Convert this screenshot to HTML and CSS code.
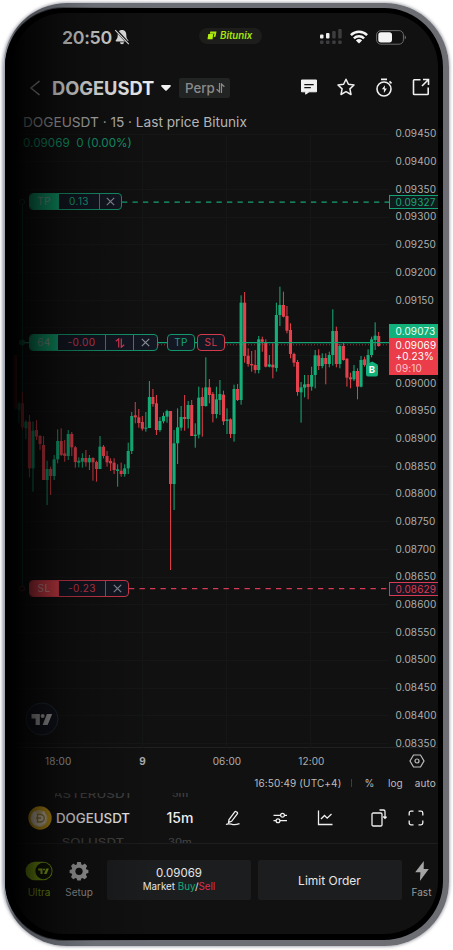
FILE: index.html
```html
<!DOCTYPE html>
<html lang="en">
<head>
    <meta charset="UTF-8">
    <meta name="viewport" content="width=device-width, initial-scale=1.0">
    <title>DOGEUSDT Perp</title>
    <link rel="stylesheet" href="styles.css">
</head>
<body>
    <div class="phone">
        <div class="screen">
            <div class="status-bar">
                <span class="clock">20:50</span>
                <svg class="bell" width="16" height="16" viewBox="0 0 16 16">
                    <path d="M8 1C5 1 3.700 3.300 3.700 6c0 3-.8 3.800-1.900 5.200-.4.6-.1 1.200.5 1.200h11.400c.6 0 .9-.6.5-1.200C13.100 9.800 12.300 9 12.300 6 12.300 3.300 11 1 8 1zM6 13.300a2 2 0 0 0 4 0z" fill="#e8e8e8"/>
                    <path d="M1.800.8l13 14" stroke="#101010" stroke-width="2.600"/>
                    <path d="M1.200 1.200l13.600 14" stroke="#e8e8e8" stroke-width="1.100"/>
                </svg>
                <div class="island">
                    <svg width="10" height="9" viewBox="0 0 10 9">
                        <path d="M3.300.5h6.200l-.9 5-2 .9.700-3.700H2.800z" fill="#a8e60c"/>
                        <path d="M1.300 3.100h5L5.500 8.300H.5z" fill="#b4f00f"/>
                    </svg>
                    <span>Bitunix</span>
                </div>
                <svg class="signal" width="22" height="16" viewBox="0 0 22 16">
                    <g fill="#f0f0f0"><rect x="0" y="5.500" width="3.500" height="4" rx="1"/><rect x="6" y="4" width="3.500" height="5.500" rx="1"/></g>
                    <g fill="#3d3d3f"><rect x="12.200" y="2" width="3.500" height="7.500" rx="1"/><rect x="18.200" y="0" width="3.500" height="9.500" rx="1"/>
                    <rect x="0" y="11.500" width="3.500" height="3.500" rx="1"/><rect x="6" y="11.500" width="3.500" height="3.500" rx="1"/><rect x="12.200" y="11.500" width="3.500" height="3.500" rx="1"/><rect x="18.200" y="11.500" width="3.500" height="3.500" rx="1"/></g>
                </svg>
                <svg class="wifi" width="18" height="14" viewBox="0 0 18 14" fill="none" stroke="#f4f4f4" stroke-width="2.500">
                    <path d="M.9 5.100a11.600 11.600 0 0 1 16.200 0"/>
                    <path d="M3.900 8.300a7.300 7.300 0 0 1 10.200 0"/>
                    <path d="M9 13.600L5.900 10.400a4.600 4.600 0 0 1 6.200 0z" fill="#f4f4f4" stroke="none"/>
                </svg>
                <svg width="31" height="15" viewBox="0 0 31 15">
                    <rect x=".6" y=".6" width="26.800" height="13.600" rx="4.300" fill="none" stroke="#6c6c6c" stroke-width="1"/>
                    <rect x="2.300" y="2.300" width="13.700" height="10.200" rx="2.700" fill="#f4f4f4"/>
                    <path d="M28.700 5.200c1.700.7 1.700 3.700 0 4.400z" fill="#6c6c6c"/>
                </svg>
            </div>

            <div class="nav">
                <svg class="back" width="12" height="16" viewBox="0 0 12 16" fill="none" stroke="#aaa" stroke-width="1.500"><path d="M10.500 1L2 8l8.500 7"/></svg>
                <h1>DOGEUSDT</h1>
                <svg class="caret" width="10" height="6" viewBox="0 0 10 6"><path d="M1 0h8c.8 0 1.200.8.600 1.400L5.700 5.500c-.4.4-1 .4-1.400 0L.4 1.400C-.2.8.2 0 1 0z" fill="#f2f2f2"/></svg>
                <div class="perp">Perp
                    <svg width="9" height="10" viewBox="0 0 9 10" fill="none" stroke="#8b8b8b" stroke-width="1.200"><path d="M3.500 0v9L.6 6.300M5.500 10V1l2.900 2.700"/></svg>
                </div>
                <div class="nav-icons">
                    <svg width="18" height="18" viewBox="0 0 18 18"><path d="M1.500 2h15v11.800H9L5.700 16.200v-2.400H1.500z" fill="#f0f0f0" stroke="#f0f0f0" stroke-linejoin="round"/><path d="M4.300 6.700h9.400M4.300 9.700h6.500" stroke="#111" stroke-width="1.300"/></svg>
                    <svg width="18" height="18" viewBox="0 0 18 18" fill="none" stroke="#f0f0f0" stroke-width="1.500" stroke-linejoin="round"><path d="M9 1.200l2.400 5.100 5.600.7-4.100 3.900 1.100 5.600L9 13.700l-5 2.800 1.100-5.600L1 7l5.600-.7z"/></svg>
                    <svg width="18" height="19" viewBox="0 0 18 19" fill="none" stroke="#f0f0f0" stroke-width="1.600"><circle cx="9" cy="11" r="7"/><path d="M6 1.400h6M14.500 3.400l2 2"/><path d="M9.900 7.200L6.900 11.300h2v3.600l3-4.400H9.800z" fill="#f0f0f0" stroke="none"/></svg>
                    <svg width="18" height="18" viewBox="0 0 18 18" fill="none" stroke="#f0f0f0" stroke-width="1.600"><path d="M8.500 1.800H2.300a.8.8 0 0 0-.8.800v13.100c0 .4.4.8.8.8h13.100c.4 0 .8-.4.8-.8V9.500M11 1.500h5.500V7M16.200 1.800L10 8"/></svg>
                </div>
            </div>

            <div class="chart">
                <svg class="plot" width="377" height="636" viewBox="12 112 377 636">
                    <g id="grid" stroke="#151616"></g>
                    <path d="M22.500 202V588" stroke="#125040"/>
                    <circle cx="22" cy="202" r="2.500" fill="#111" stroke="#125040"/>
                    <circle cx="22" cy="588.500" r="2.500" fill="#111" stroke="#70303a"/>
                    <path d="M122 202.200H389" stroke="#16a176" stroke-width="1.300" stroke-dasharray="5.300 5.200"/>
                    <path d="M129 588.700H389" stroke="#d93a55" stroke-width="1.300" stroke-dasharray="5.300 5.200"/>
                    <path d="M158 344.800H389" stroke="#a0313a" stroke-dasharray="1 2"/>
                    <g id="candles"></g>
                    <path d="M22 342.700H389" stroke="#14a274" stroke-width="1.200"/>
                    <circle cx="22" cy="342.500" r="3" fill="#0d7a58"/>
                    <path d="M372.200 361.500l4.500 2.500q1.300.6 1.300 2v8.500q0 2-2 2h-8q-2 0-2-2V366q0-1.400 1.300-2z" fill="#12b07a"/>
                    <text class="fill-mark" x="372" y="373.300">B</text>
                </svg>

                <ul class="price-axis">
                    <li>0.09450</li>
                    <li>0.09400</li>
                    <li>0.09350</li>
                    <li>0.09300</li>
                    <li>0.09250</li>
                    <li>0.09200</li>
                    <li>0.09150</li>
                    <li></li>
                    <li></li>
                    <li>0.09000</li>
                    <li>0.08950</li>
                    <li>0.08900</li>
                    <li>0.08850</li>
                    <li>0.08800</li>
                    <li>0.08750</li>
                    <li>0.08700</li>
                    <li>0.08650</li>
                    <li>0.08600</li>
                    <li>0.08550</li>
                    <li>0.08500</li>
                    <li>0.08450</li>
                    <li>0.08400</li>
                    <li>0.08350</li>
                </ul>

                <div class="tag tag-tp">0.09327</div>
                <div class="tag tag-entry">0.09073</div>
                <div class="tag tag-last"><span>0.09069</span><span>+0.23%</span><span class="countdown">09:10</span></div>
                <div class="tag tag-sl">0.08629</div>

                <div class="legend">
                    <div class="legend-title">DOGEUSDT · 15 · Last price Bitunix</div>
                    <div class="legend-values">0.09069&nbsp; 0 (0.00%)</div>
                </div>

                <div class="order green order-tp">
                    <span class="kind">TP</span><span class="value">0.13</span>
                    <span class="close"><svg width="9" height="9" viewBox="0 0 9 9"><path d="M.8.8l7.400 7.400M8.200.8L.8 8.200"/></svg></span>
                </div>
                <div class="order-row">
                    <div class="order green order-position">
                        <span class="kind">64</span><span class="value loss">-0.00</span>
                        <span class="reverse"><svg width="10" height="10" viewBox="0 0 10 10"><path d="M.8 3.200L3.700.8V9.600M6.300.4v8.800l2.900-2.400"/></svg></span>
                        <span class="close"><svg width="9" height="9" viewBox="0 0 9 9"><path d="M.8.8l7.400 7.400M8.200.8L.8 8.200"/></svg></span>
                    </div>
                    <div class="order green chip">TP</div>
                    <div class="order red chip">SL</div>
                </div>
                <div class="order red order-sl">
                    <span class="kind">SL</span><span class="value">-0.23</span>
                    <span class="close"><svg width="9" height="9" viewBox="0 0 9 9"><path d="M.8.8l7.400 7.400M8.200.8L.8 8.200"/></svg></span>
                </div>

                <svg class="tv-logo" width="34" height="34" viewBox="0 0 34 34">
                    <circle cx="17" cy="17" r="16" fill="#10141d" stroke="#26303c"/>
                    <g fill="#b8b8b8"><path d="M6.500 12h8.300v11h-4.200v-6.600H6.500z"/><circle cx="17.600" cy="14" r="2"/><path d="M21.900 12h5.300l-4.600 11h-5z"/></g>
                </svg>
            </div>

            <div class="time-axis">
                <span>18:00</span>
                <b>9</b>
                <span>06:00</span>
                <span>12:00</span>
                <svg width="16" height="14" viewBox="0 0 16 14" fill="none" stroke="#bdbdbd" stroke-width="1.200"><path d="M4.500 1h7L15 7l-3.500 6h-7L1 7z"/><circle cx="8" cy="7" r="2"/></svg>
            </div>

            <div class="scale-row">
                <span class="utc">16:50:49 (UTC+4)</span>
                <span class="sep"></span>
                <span class="pct">%</span>
                <span class="log">log</span>
                <span>auto</span>
            </div>

            <div class="pair-bar">
                <svg class="coin" width="24" height="24" viewBox="0 0 24 24">
                    <circle cx="12" cy="12" r="11.700" fill="#d2a31a"/>
                    <circle cx="11" cy="12.500" r="8.600" fill="#d8c08a"/>
                    <path d="M3.500 9l3-4 2.500 3h4l3-3.500 2 6.500-1 6-5 3-6-1.500L3 14z" fill="#ecdfc4"/>
                    <path d="M9.500 8.500h3a3.500 3.500 0 0 1 0 7.500h-3zM8 12h5" fill="none" stroke="#a68a45" stroke-width="1.400"/>
                </svg>
                <div class="picker pair">
                    <span class="ghost">ASTERUSDT</span>
                    <span>DOGEUSDT</span>
                    <span class="ghost">SOLUSDT</span>
                </div>
                <div class="picker interval">
                    <span class="ghost">5m</span>
                    <span>15m</span>
                    <span class="ghost">30m</span>
                </div>
                <div class="tools">
                    <svg width="16" height="16" viewBox="0 0 16 16"><path d="M4 9.600L9.800 1.900c.4-.5 1-.6 1.500-.2l.8.6c.5.400.6 1 .2 1.500L6.600 11.300l-3 1.100zM1 14.600c2-1.500 4-.8 6-.3s4 .5 7.500-.7"/></svg>
                    <svg width="16" height="16" viewBox="0 0 16 16"><path d="M1.500 5.300h7M12.500 5.300H15M1.500 10.700h2.500M8 10.700H15"/><circle cx="10.500" cy="5.300" r="1.900"/><circle cx="6" cy="10.700" r="1.900"/></svg>
                    <svg width="16" height="16" viewBox="0 0 16 16"><path d="M1.500.5v14h14M4 9l3.500-3.500 2.700 2.700L14.500 4"/></svg>
                    <svg width="16" height="18" viewBox="0 0 16 18"><path d="M1 5.200c0-.7.500-1.200 1.200-1.200h7.600c.7 0 1.200.5 1.200 1.200v10.600c0 .7-.5 1.200-1.200 1.200H2.200C1.500 17 1 16.500 1 15.800zM8.500 1h4c.8 0 1.500.7 1.500 1.500V9M12.200 7.500L14 9.300l1.600-1.600"/></svg>
                    <svg width="16" height="16" viewBox="0 0 16 16"><path d="M1.200 5.500V3c0-1 .8-1.800 1.800-1.800h2.500M10.500 1.200H13c1 0 1.800.8 1.800 1.800v2.500M14.800 10.500V13c0 1-.8 1.800-1.800 1.800h-2.500M5.500 14.800H3c-1 0-1.800-.8-1.800-1.800v-2.500"/></svg>
                </div>
            </div>

            <div class="footer">
                <div class="action ultra">
                    <svg width="28" height="20" viewBox="0 0 28 20">
                        <rect x=".5" y=".7" width="27" height="18.600" rx="9.300" fill="#8fba14"/>
                        <circle cx="18.500" cy="10" r="8.200" fill="#12160a"/>
                        <g fill="#a8d024"><path d="M13.200 7.400h4.300V13h-2v-3.500h-2.300z"/><circle cx="19" cy="8.400" r="1"/><path d="M21.200 7.400h2.700L21.600 13H19z"/></g>
                    </svg>
                    <span>Ultra</span>
                </div>
                <div class="action">
                    <svg width="20" height="20" viewBox="0 0 20 20"><path d="M8.200 1h3.600l.6 2.400 1.200.5 2.200-1.300 2.300 2.400-1.200 2.200.5 1.200 2 .5v3l-2 .6-.5 1.300 1.200 2.200-2.400 2.300-2.200-1.200-1.200.5-.6 1.900H8.300l-.6-1.900-1.300-.5-2.200 1.200L2 16l1.200-2.200-.6-1.300-2-.6V8.900l2-.5.6-1.200L2 5l2.200-2.400 2.200 1.300 1.300-.5z" fill="#a5a5a5"/><circle cx="10" cy="10.300" r="3.600" fill="#111"/></svg>
                    <span>Setup</span>
                </div>
                <button class="trade market">
                    <span class="price">0.09069</span>
                    <span>Market <i class="buy">Buy</i>/<i class="sell">Sell</i></span>
                </button>
                <button class="trade">Limit Order</button>
                <div class="action">
                    <svg width="16" height="20" viewBox="0 0 16 20"><path d="M9.800 0L1.200 11.300h5.200L5.900 20l8.900-12H9.700z" fill="#a5a5a5"/></svg>
                    <span>Fast</span>
                </div>
            </div>

            <div class="home-area"></div>
        </div>
        <div class="fade"></div>
    </div>

    <script>
        const UP = '#14ae78';
        const DOWN = '#e5414c';
        const STEP = 3.5276;

        // [up, body top, body bottom, wick top, wick bottom], in thirds of a pixel below each segment's top
        const segments = [
            { top: 370, bars: [
                [0,-45,115,-45,120],[1,100,120,95,160],[0,100,172,65,180],[1,155,175,150,208],
                [0,155,295,135,322],[1,182,295,155,365],[0,180,200,150,210],[0,198,222,195,240],
                [0,225,330,198,330],[1,297,330,272,405],[0,297,318,290,375],[1,268,318,255,330],
                [1,213,268,178,280],[0,213,255,175,258],[0,250,258,210,275],[1,192,258,180,270],
                [0,192,232,186,258],[0,232,276,228,293],[1,272,278,262,292],[1,264,275,250,293],
                [0,264,277,240,290],[1,264,277,255,300],[0,264,277,262,332],[0,276,297,272,335],
                [1,230,297,198,297],[0,230,258,225,265],[0,258,277,243,290],[0,273,280,265,303],
                [0,278,300,265,312],[1,298,303,283,350],[0,302,312,278,320],[1,295,312,283,320]
            ] },
            { top: 340, bars: [
                [1,333,385,308,402],[1,228,333,216,342],[0,226,232,186,250],[0,232,249,207,263],
                [0,246,266,228,272],[1,263,266,216,275],[1,171,264,123,264],[0,171,192,147,200],
                [0,190,270,165,285],[1,243,270,231,275],[1,228,244,218,250],[1,213,230,209,248],
                [0,213,432,213,690],[1,310,432,270,510],[1,262,310,205,372],[1,231,263,198,272],
                [0,231,237,165,272],[1,195,237,183,265],[0,195,288,180,288],[1,284,288,250,323],
                [1,173,284,140,295],[0,171,198,143,290],[1,142,198,52,200],[0,142,165,117,190],
                [0,162,222,156,247],[1,178,222,140,235],[1,162,180,120,225],[0,164,244,152,255],
                [1,238,243,205,282],[0,238,282,235,294],[1,147,282,134,305],[0,147,180,132,183]
            ] },
            { top: 270, bars: [
                [1,98,390,76,404],[0,98,258,66,278],[0,257,282,235,290],[0,282,286,243,305],
                [0,285,300,240,310],[1,208,300,198,310],[0,208,215,200,245],[0,219,290,208,292],
                [1,283,290,255,292],[0,284,292,220,325],[1,135,294,98,305],[1,105,135,50,168],
                [0,105,140,65,142],[0,138,182,108,190],[0,180,252,160,265],[0,252,278,248,290],
                [0,276,366,270,377],[1,352,367,336,458],[1,343,353,315,382],[0,342,351,315,388],
                [1,315,350,290,362],[1,256,315,240,355],[0,256,288,238,300],[1,264,288,250,295],
                [0,264,282,250,343],[1,255,282,245,292],[1,183,255,118,287],[0,183,282,170,292],
                [1,228,282,222,295],[0,228,270,218,272],[0,266,323,265,350],[0,322,328,308,355],
                [1,303,328,285,333],[0,303,350,295,388],[1,270,350,258,352],[0,268,285,260,290],
                [1,255,285,238,300],[1,208,255,200,262],[1,197,210,157,240],[0,198,228,186,230]
            ] }
        ];

        function drawCandles() {
            let x = 15.33;
            let out = '';
            segments.forEach(function (seg) {
                seg.bars.forEach(function (bar) {
                    const color = bar[0] ? UP : DOWN;
                    const y = bar.slice(1).map(v => seg.top + v / 3);
                    out += `<rect x="${x - 0.5}" y="${y[2]}" width="1" height="${y[3] - y[2]}" fill="${color}"/>`;
                    out += `<rect x="${x - 1.55}" y="${y[0]}" width="3.1" height="${y[1] - y[0]}" fill="${color}"/>`;
                    x += STEP;
                });
            });
            document.getElementById('candles').innerHTML = out;
        }

        function drawGrid() {
            let d = 'M142.5 134V748M226.5 134V748M310.500 134V748';
            for (let i = 0; i < 23; i++) {
                d += `M12 ${Math.round(133.5 + i * 27.7) + 0.5}H389`;
            }
            document.getElementById('grid').innerHTML = `<path d="${d}"/>`;
        }

        drawGrid();
        drawCandles();
    </script>
</body>
</html>
```

FILE: styles.css
```css
* {
    box-sizing: border-box;
}

body {
    margin: 0;
    height: 950px;
    overflow: hidden;
    background: #fff;
    font-family: Inter, "Liberation Sans", sans-serif;
    color: #eee;
}

svg {
    display: block;
    flex: none;
}

.phone {
    position: relative;
    width: 446px;
    height: 943px;
    margin: 3px 0 0 3px;
    padding: 5px 6px 6px 2px;
    border-radius: 64px;
    background: linear-gradient(90deg, #b9bdc8 0, #8d919b 3px, #4a4d53 14px, #6c6f75 90px, #6c6e74 100%);
    box-shadow: 0 0 3px 1px rgba(120, 122, 135, 0.6);
}

.screen {
    display: flex;
    flex-direction: column;
    height: 932px;
    border: solid #000;
    border-width: 5px 5px 6px 7px;
    border-radius: 59px;
    background: #111;
    overflow: hidden;
}

/* darkens the left side of the device */
.fade {
    position: absolute;
    inset: 4px 6px 5px 2px;
    border-radius: 59px;
    background: linear-gradient(90deg, #000 0, rgba(0, 0, 0, 0.95) 10px, rgba(0, 0, 0, 0.75) 20px, rgba(0, 0, 0, 0.58) 34px, rgba(0, 0, 0, 0.36) 55px, rgba(0, 0, 0, 0.16) 95px, rgba(0, 0, 0, 0) 150px);
    pointer-events: none;
}

.status-bar {
    display: flex;
    align-items: center;
    height: 48px;
    padding-left: 50px;
    flex: none;
}

.clock {
    width: 52px;
    font-size: 17.8px;
    font-weight: 600;
    letter-spacing: -0.3px;
    color: #ddd;
}

.island {
    display: flex;
    align-items: center;
    gap: 3px;
    width: 63px;
    height: 16px;
    margin: -3px 58px 0 69px;
    padding-left: 8px;
    border-radius: 8px;
    background: #1d1e1b;
    color: #a8e60c;
    font-size: 9.7px;
    font-weight: 600;
    font-style: italic;
}

.signal {
    margin-right: 8px;
}

.wifi {
    margin-right: 8px;
}

.nav {
    display: flex;
    align-items: center;
    height: 51px;
    padding: 2px 8px 0 17px;
    flex: none;
}

.nav h1 {
    width: 103px;
    margin: 0 6px 0 11px;
    font-size: 18.3px;
    font-weight: 700;
    white-space: nowrap;
}

.perp {
    display: flex;
    align-items: center;
    gap: 1px;
    width: 51px;
    height: 20px;
    margin-left: 8px;
    padding-left: 6px;
    border-radius: 2px;
    background: #222323;
    color: #8b8b8b;
    font-size: 13.3px;
    font-weight: 500;
}

.nav-icons {
    display: flex;
    flex: 1;
    justify-content: space-between;
    padding-left: 70px;
}

.chart {
    position: relative;
    display: flex;
    height: 636px;
    flex: none;
    border-bottom: 1px solid #202122;
}

.fill-mark {
    font-size: 9.5px;
    font-weight: 700;
    text-anchor: middle;
    fill: #fff;
}

.price-axis {
    width: 49px;
    margin: 0;
    padding: 8.4px 0 0 6.5px;
    list-style: none;
}

.price-axis li {
    height: 27.7px;
    line-height: 27.7px;
}

.price-axis,
.tag,
.time-axis,
.scale-row {
    font-size: 10px;
    letter-spacing: 0.12px;
    color: #aeaeae;
}

.tag {
    position: absolute;
    left: 377px;
    width: 49px;
    height: 14px;
    padding-left: 6.5px;
    line-height: 14px;
}

.tag-tp {
    top: 83px;
    border: 1px solid #16a176;
    border-right: 0;
    padding-left: 5.5px;
    line-height: 13px;
    background: #101b1c;
    color: #17a57a;
}

.tag-sl {
    top: 470px;
    border: 1px solid #d93a55;
    border-right: 0;
    padding-left: 5.5px;
    line-height: 13px;
    background: #15141f;
    color: #d93a55;
}

.tag-entry {
    top: 212px;
    background: #12b07a;
    color: #e9fff6;
}

.tag-last {
    display: flex;
    flex-direction: column;
    top: 226px;
    height: 37px;
    padding-top: 1.5px;
    line-height: 11.5px;
    background: #ea3d49;
    color: #fff;
}

.countdown {
    color: #ffc3c7;
}

.legend {
    position: absolute;
    left: 11px;
    top: 2px;
    white-space: nowrap;
}

.legend-title {
    font-size: 13.65px;
    line-height: 16px;
    color: #b4b4b4;
}

.legend-values {
    margin-top: 6px;
    font-size: 11.7px;
    line-height: 15px;
    color: #129c6f;
}

.order {
    display: flex;
    height: 17px;
    border: 1.5px solid;
    border-radius: 4px;
    background: #131722;
    font-size: 10px;
    line-height: 15.5px;
    text-align: center;
    letter-spacing: 0.4px;
    overflow: hidden;
}

.order span {
    border-left: 1px solid;
    border-color: inherit;
}

.order .kind {
    width: 28px;
    border: 0;
}

.order svg {
    margin: 3px auto 0;
    fill: none;
    stroke: #8a8e98;
    stroke-width: 1.2;
}

.order .close {
    flex: 1;
}

.green {
    border-color: #14966b;
    color: #17a57a;
}

.green .kind {
    background: #0f9d6c;
    color: #7d9c90;
}

.red {
    border-color: #d33a4c;
    color: #d33a4c;
}

.red .kind {
    background: #e0414c;
    color: #e0a0a4;
}

.order-tp {
    position: absolute;
    left: 17px;
    top: 81px;
    width: 93px;
}

.order-tp .value {
    width: 41px;
}

.order-row {
    position: absolute;
    left: 17px;
    top: 222px;
    display: flex;
}

.order-position {
    width: 129px;
    margin-right: 9px;
}

.order-position .value {
    width: 47px;
}

.order .loss {
    color: #d33a55;
    border: 0;
}

.order .reverse {
    width: 28px;
}

.order .reverse svg {
    stroke: #d93a55;
}

.chip {
    width: 28px;
    margin-right: 2px;
    justify-content: center;
}

.order-sl {
    position: absolute;
    left: 17px;
    top: 468px;
    width: 100px;
}

.order-sl .value {
    width: 47px;
}

.tv-logo {
    position: absolute;
    left: 13px;
    top: 590px;
}

.time-axis {
    display: grid;
    grid-template-columns: repeat(4, 84.4px) 1fr;
    align-items: center;
    justify-items: center;
    height: 25px;
    padding-left: 4px;
    flex: none;
}

.time-axis svg {
    margin-left: 43px;
}

.scale-row {
    display: flex;
    align-items: center;
    justify-content: flex-end;
    height: 20px;
    padding-right: 2px;
    flex: none;
    color: #bdbdbd;
}

.sep {
    width: 1px;
    height: 8px;
    margin: 0 12px 0 10px;
    background: #3d3d3d;
}

.pct {
    margin-right: 13.5px;
}

.log {
    margin-right: 12px;
}

.pair-bar {
    display: flex;
    align-items: center;
    height: 51px;
    padding-left: 16px;
    flex: none;
    border-bottom: 1px solid #1c1d1e;
}

.picker {
    display: flex;
    flex-direction: column;
    align-items: center;
    justify-content: center;
    height: 50px;
    overflow: hidden;
    line-height: 24px;
    white-space: nowrap;
}

.picker .ghost {
    color: #424242;
    transform: scaleY(0.75);
}

.pair {
    width: 76px;
    margin-left: 3px;
    font-size: 13.3px;
    font-weight: 500;
}

.interval {
    width: 36px;
    margin-left: 31px;
    font-size: 14px;
    font-weight: 500;
}

.interval .ghost {
    font-size: 11px;
}

.tools {
    display: flex;
    margin-left: 27px;
}

.tools svg {
    margin-right: 30.5px;
    fill: none;
    stroke: #efefef;
    stroke-width: 1.3;
}

.tools svg:nth-child(2) {
    margin-right: 29px;
}

.tools svg:nth-child(3) {
    margin-right: 38.5px;
}

.tools svg:nth-child(4) {
    margin: -1px 21px 0 0;
}

.tools svg:nth-child(5) {
    margin-right: 0;
}

.footer {
    display: flex;
    height: 57px;
    padding-top: 16px;
    padding-left: 7px;
    flex: none;
}

.action {
    display: flex;
    flex-direction: column;
    align-items: center;
    width: 40px;
    padding-top: 1px;
    flex: none;
    font-size: 10px;
    color: #9a9a9a;
}

.action span {
    margin-top: 5px;
}

.ultra {
    color: #8fba14;
}

.trade {
    width: 144px;
    height: 40px;
    margin: 0 0 0 6.5px;
    padding: 0;
    flex: none;
    border: 0;
    border-radius: 2px;
    background: #1c1d1f;
    color: #e6e6e6;
    font-family: inherit;
    font-size: 12px;
}

.trade.market {
    display: flex;
    flex-direction: column;
    align-items: center;
    justify-content: center;
    margin-left: 8px;
    font-size: 9.8px;
    line-height: 14px;
}

.trade .price {
    font-size: 11.5px;
}

.trade i {
    font-style: normal;
}

.buy {
    color: #14ae78;
}

.sell {
    color: #dc3150;
}

.home-area {
    flex: 1;
}
```
